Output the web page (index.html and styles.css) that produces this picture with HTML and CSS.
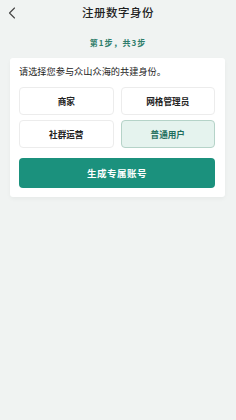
FILE: index.html
```html
<!DOCTYPE html>
<html lang="zh">
<head>
<meta charset="utf-8">
<link rel="stylesheet" href="styles.css">
</head>
<body>
<div class="page">
  <header class="header">
    <svg class="back" width="8" height="12" viewBox="0 0 8 12"><path d="M6.5 1 L1.5 6 L6.5 11" fill="none" stroke="#444" stroke-width="1.1" stroke-linecap="round" stroke-linejoin="round"/></svg>
    <h1 class="title">注册数字身份</h1>
  </header>
  <div class="step">第1步，共3步</div>
  <section class="card">
    <p class="prompt">请选择您参与众山众海的共建身份。</p>
    <div class="options">
      <div class="option">商家</div>
      <div class="option">网格管理员</div>
      <div class="option">社群运营</div>
      <div class="option selected">普通用户</div>
    </div>
    <button class="submit">生成专属账号</button>
  </section>
</div>
</body>
</html>
```
FILE: styles.css
```css
html, body {
  margin: 0;
  padding: 0;
}
body {
  background: #f0f3f2;
  font-family: "Noto Sans CJK SC", "Noto Sans", sans-serif;
  color: #222;
  width: 236px;
  height: 420px;
}
.page {
  display: flex;
  flex-direction: column;
}
.header {
  position: relative;
  height: 24px;
  display: flex;
  align-items: center;
  justify-content: center;
}
.back {
  position: absolute;
  left: 8px;
  top: 7px;
}
.title {
  margin: 0;
  font-size: 11.5px;
  font-weight: 500;
  color: #222;
  letter-spacing: 0.5px;
}
.step {
  margin-top: 12px;
  text-align: center;
  font-size: 8px;
  color: #2f7d6b;
  font-weight: 600;
  letter-spacing: 1px;
  line-height: 14px;
}
.card {
  margin: 8px 11px 0 10px;
  background: #fff;
  border-radius: 3px;
  padding: 6px 10px 9px 9px;
  box-shadow: 0 2px 4px rgba(0,0,0,0.04);
}
.prompt {
  margin: 0;
  font-size: 9.2px;
  line-height: 14px;
  color: #222;
}
.options {
  margin-top: 9px;
  display: grid;
  grid-template-columns: 1fr 1fr;
  column-gap: 7px;
  row-gap: 5px;
}
.option {
  height: 28px;
  border: 1px solid #ececec;
  border-radius: 4px;
  box-sizing: border-box;
  display: flex;
  align-items: center;
  justify-content: center;
  font-size: 8.6px;
  font-weight: 600;
  color: #222;
}
.option.selected {
  background: #e5f3ee;
  border-color: #b5d3c8;
  color: #1e6f5d;
}
.submit {
  margin-top: 10px;
  width: 100%;
  height: 30px;
  border: none;
  border-radius: 4px;
  background: #1b917d;
  color: #fff;
  font-family: "Noto Sans CJK SC", "Noto Sans", sans-serif;
  font-size: 9.5px;
  font-weight: 700;
  letter-spacing: 0.5px;
  display: block;
}
```
